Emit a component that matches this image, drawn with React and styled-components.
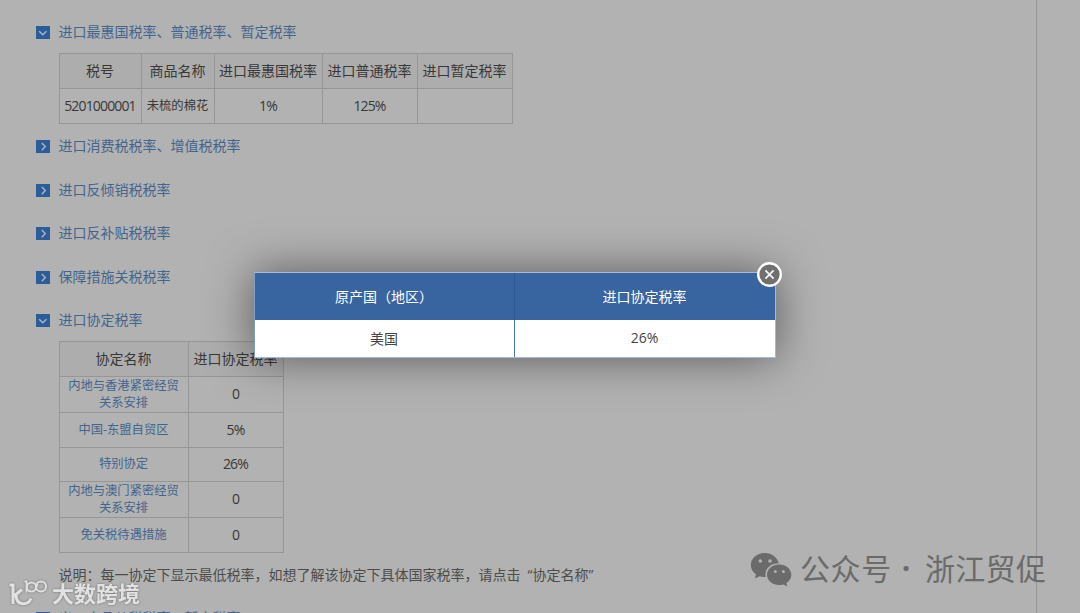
import React from "react";
import styled, { createGlobalStyle } from "styled-components";

const GlobalStyle = createGlobalStyle`
  * { box-sizing: border-box; }
  html, body { margin: 0; height: 613px; overflow: hidden; background: #b2b2b2; }
  body { font-family: "Open Sans", "Noto Sans CJK SC", sans-serif; font-size: 14px; font-weight: 400; color: #3c3c3c; }
`;

const Page = styled.div`
  position: relative;
  width: 1080px;
  height: 613px;
  overflow: hidden;
  background: #b2b2b2;
`;

const Content = styled.main`
  width: 1037px;
  height: 613px;
  overflow: hidden;
  padding: 21px 0 0 36px;
  border-right: 1px solid #979797;
`;

const SectionTitle = styled.div`
  display: flex;
  align-items: center;
  gap: 8.5px;
  height: 22px;
  margin-bottom: ${(p) => p.$after}px;
  color: #42658f;
  line-height: 22px;
  white-space: nowrap;
`;

const Toggle = styled.svg`
  display: block;
  flex: none;
  width: 14px;
  height: 13px;
  margin-top: 1px;
  background: #2c5d98;
`;

const Table = styled.div`
  display: grid;
  grid-template-columns: ${(p) => p.$columns};
  grid-template-rows: ${(p) => p.$rows};
  width: max-content;
  margin: 0 0 ${(p) => p.$after}px 23px;
  border-top: 1px solid #969696;
  border-left: 1px solid #969696;
`;

const Cell = styled.div`
  display: flex;
  align-items: center;
  justify-content: center;
  padding: 0 1px 1px 0;
  border-right: 1px solid #969696;
  border-bottom: 1px solid #969696;
  background: ${(p) => (p.$head ? "#adadad" : "transparent")};
  color: ${(p) => (p.$link ? "#42658f" : "#383838")};
  font-size: ${(p) => (p.$head ? 14 : p.$small ? 12.3 : 14)}px;
  letter-spacing: ${(p) => (p.$head || p.$small ? 0 : -0.85)}px;
  line-height: ${(p) => (p.$small ? 17.5 : 18)}px;
  text-align: center;
  white-space: pre;
`;

const Note = styled.p`
  height: 22px;
  margin: 0 0 21px 22.5px;
  color: #4c4c4c;
  line-height: 22px;
  white-space: nowrap;
`;

const Quoted = styled.span`
  margin-left: 7px;
`;

const Dialog = styled.div`
  position: absolute;
  left: 254px;
  top: 272px;
  width: 522px;
  height: 86px;
  border: 1px solid #a5bad6;
  border-left-color: #7f9fca;
  background: #fff;
  box-shadow: 0 0 46px rgba(0, 0, 0, 0.5);
`;

const DialogRow = styled.div`
  display: grid;
  grid-template-columns: 260px 260px;
  height: ${(p) => p.$height}px;
  background: ${(p) => (p.$head ? "#38659f" : "#fff")};
  color: ${(p) => (p.$head ? "#fff" : "#444")};
`;

const DialogCell = styled.div`
  display: flex;
  align-items: center;
  justify-content: center;
  padding: 0 1px 2px 0;
  white-space: pre;

  &:first-child { border-right: 1px solid ${(p) => (p.$head ? "#2a5899" : "#4a78b4")}; }
`;

const CloseButton = styled.button`
  position: absolute;
  left: 500.5px;
  top: -12px;
  width: 27px;
  height: 27px;
  padding: 0;
  border: 0;
  background: none;

  svg { display: block; }
`;

const AccountMark = styled.div`
  position: absolute;
  left: 750px;
  top: 544px;
  display: flex;
  align-items: center;
  height: 46px;
  color: #6b6b6b;
  font-family: "Noto Sans CJK SC", sans-serif;
  font-size: 30px;
  line-height: 46px;
  white-space: pre;

  svg { display: block; margin: 4px 8px 0 0; }
`;

const AccountText = styled.span`
  width: ${(p) => p.$width}px;
  letter-spacing: ${(p) => p.$spacing || 0}px;
`;

const Dot = styled.span`
  width: 33px;
  padding: 2px 5px 0 0;
  font-family: "Open Sans", sans-serif;
  font-weight: 700;
  text-align: center;
`;

const SiteMark = styled.div`
  position: absolute;
  left: 8px;
  top: 576px;
  display: flex;
  align-items: center;
  height: 32px;
  color: #e2e2e2;
  font-family: "Noto Sans CJK SC", sans-serif;
  font-size: 22px;
  font-weight: 700;
  line-height: 32px;
  white-space: nowrap;
  filter: drop-shadow(0 0 1px rgba(80, 80, 80, 0.7));

  svg { display: block; margin: 1px 4px 0 0; }
`;

function Section({ open, after, children }) {
  return (
    <SectionTitle $after={after}>
      <Toggle viewBox="0 0 14 13">
        <path
          d={open ? "M3.2 5.2 6.8 8.8 10.4 5.2" : "M5.8 3 9.3 6.6 5.8 10.2"}
          fill="none"
          stroke="#a9b6c6"
          strokeWidth="1.4"
        />
      </Toggle>
      {children}
    </SectionTitle>
  );
}

const rateHead = ["税号", "商品名称", "进口最惠国税率", "进口普通税率", "进口暂定税率"];
const agreements = [
  ["内地与香港紧密经贸\n关系安排", "0"],
  ["中国-东盟自贸区", "5%"],
  ["特别协定", "26%"],
  ["内地与澳门紧密经贸\n关系安排", "0"],
  ["免关税待遇措施", "0"],
];

export default function App() {
  return (
    <Page>
      <GlobalStyle />
      <Content>
        <Section open after={10}>进口最惠国税率、普通税率、暂定税率</Section>
        <Table $columns="82px 73px 108px 95px 95px" $rows="35px 35px" $after={11}>
          {rateHead.map((t) => <Cell key={t} $head>{t}</Cell>)}
          <Cell>5201000001</Cell>
          <Cell $small>未梳的棉花</Cell>
          <Cell>1%</Cell>
          <Cell>125%</Cell>
          <Cell />
        </Table>
        <Section after={22}>进口消费税税率、增值税税率</Section>
        <Section after={21}>进口反倾销税税率</Section>
        <Section after={22}>进口反补贴税税率</Section>
        <Section after={21}>保障措施关税税率</Section>
        <Section open after={10}>进口协定税率</Section>
        <Table $columns="129px 95px" $rows="35px 36px 35px 34px 36px 35px" $after={11}>
          <Cell $head>协定名称</Cell>
          <Cell $head>进口协定税率</Cell>
          {agreements.map(([name, rate]) => (
            <React.Fragment key={name}>
              <Cell $link $small>{name}</Cell>
              <Cell>{rate}</Cell>
            </React.Fragment>
          ))}
        </Table>
        <Note>
          说明：每一协定下显示最低税率，如想了解该协定下具体国家税率，请点击<Quoted>“协定名称”</Quoted>
        </Note>
        <Section open after={0}>出口商品从税税率、暂定税率</Section>
      </Content>

      <Dialog>
        <DialogRow $head $height={47}>
          <DialogCell $head>原产国（地区）</DialogCell>
          <DialogCell $head>进口协定税率</DialogCell>
        </DialogRow>
        <DialogRow $height={37}>
          <DialogCell>美国</DialogCell>
          <DialogCell>26%</DialogCell>
        </DialogRow>
        <CloseButton aria-label="关闭">
          <svg width="27" height="27" viewBox="0 0 27 27">
            <circle cx="13.5" cy="13.5" r="11.3" fill="#707070" stroke="#fff" strokeWidth="2.4" />
            <path d="M9.4 9.4 17.6 17.6M17.6 9.4 9.4 17.6" stroke="#f4f4f4" strokeWidth="1.8" />
          </svg>
        </CloseButton>
      </Dialog>

      <AccountMark>
        <svg width="42" height="35" viewBox="0 0 42 35">
          <path
            fillRule="evenodd"
            fill="currentColor"
            d="M15 1C7 1 .8 6.3 .8 13c0 3.8 2 7.1 5.2 9.3L4.8 26.6 9.7 24.2c1.9 .6 3.9 .9 6 .8C14 17.5 20 11.3 28.8 11.3 27.5 5.3 21.8 1 15 1ZM10.3 7.2a1.8 1.8 0 1 1 0 3.6 1.8 1.8 0 0 1 0-3.6ZM20 7.2a1.8 1.8 0 1 1 0 3.6 1.8 1.8 0 0 1 0-3.6Z"
          />
          <path
            fillRule="evenodd"
            fill="currentColor"
            d="M29.2 12.5c-6.9 0-12.2 4.6-12.2 10.3s5.3 10.3 12.2 10.3c1.4 0 2.8-.2 4.1-.6l4 2.1-1-3.5c3.1-1.9 5-4.9 5-8.3 0-5.7-5.2-10.3-12.1-10.3ZM25.3 17.9a1.5 1.5 0 1 1 0 3 1.5 1.5 0 0 1 0-3ZM33.4 17.9a1.5 1.5 0 1 1 0 3 1.5 1.5 0 0 1 0-3Z"
          />
        </svg>
        <AccountText $width={92} $spacing={0.6}>公众号</AccountText>
        <Dot>·</Dot>
        <AccountText $width={122} $spacing={0.3}>浙江贸促</AccountText>
      </AccountMark>

      <SiteMark>
        <svg width="40" height="28" viewBox="0 0 40 28" fill="none" stroke="currentColor">
          <path d="M1.5 6H5V25M6 17 14 10.5M8 15C8 21.5 11 24.8 15.5 24.8 19 24.8 21.5 23 23 19.5" strokeWidth="3" />
          <path d="M16.5 2.5H18.5V13.5" strokeWidth="1.8" />
          <circle cx="23.5" cy="8" r="4.6" strokeWidth="2" />
          <circle cx="33" cy="7.5" r="5" strokeWidth="2" />
          <path d="M27.5 10.5 29.5 5" strokeWidth="1.8" />
        </svg>
        大数跨境
      </SiteMark>
    </Page>
  );
}
